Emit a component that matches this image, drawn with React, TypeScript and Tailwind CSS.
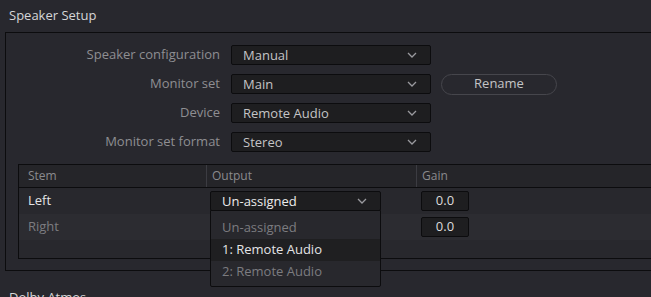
import React from 'react';

const Chevron: React.FC = () => (
  <svg width="10" height="6" viewBox="0 0 10 6" className="shrink-0">
    <path d="M1 1 L5 5 L9 1" fill="none" stroke="#9a9a9e" strokeWidth="1.3" />
  </svg>
);

const Select: React.FC<{ value: string; width: string; bright?: boolean }> = ({ value, width, bright }) => (
  <div
    className={`${width} h-[20px] flex items-center justify-between pl-[11px] pr-[13px] bg-[#1e1e20] border border-[#0c0c0e] rounded-[2px] text-[13px] ${
      bright ? 'text-[#ececec]' : 'text-[#c4c4c6]'
    }`}
  >
    <span className="leading-none">{value}</span>
    <Chevron />
  </div>
);

const GainBox: React.FC<{ value: string }> = ({ value }) => (
  <div className="w-[48px] h-[20px] flex items-center justify-center bg-[#1e1e20] border border-[#0c0c0e] rounded-[2px] text-[13px] text-[#dcdcdc]">
    {value}
  </div>
);

const fields = [
  { label: 'Speaker configuration', value: 'Manual' },
  { label: 'Monitor set', value: 'Main', rename: true },
  { label: 'Device', value: 'Remote Audio' },
  { label: 'Monitor set format', value: 'Stereo' },
];

export default function App() {
  return (
    <div
      className="w-[651px] h-[297px] overflow-hidden bg-[#28282e] text-[13px]"
      style={{ fontFamily: '"Open Sans", "Noto Sans", sans-serif' }}
    >
      <div className="h-[32px] pl-[9px] pt-[6px] text-[#d6d6d8] leading-[18px]">Speaker Setup</div>

      <div className="ml-[5px] h-[239px] border border-r-0 border-[#0c0c0e] pt-[12px]">
        <div className="flex flex-col gap-[9px]">
          {fields.map(f => (
            <div key={f.label} className="flex items-center h-[20px]">
              <div className="w-[214px] text-right text-[#8e8e92]">{f.label}</div>
              <div className="ml-[11px]">
                <Select value={f.value} width="w-[200px]" />
              </div>
              {f.rename && (
                <div className="ml-[10px] w-[116px] h-[21px] flex items-center justify-center rounded-full border border-[#46464c] text-[#c4c4c6]">
                  Rename
                </div>
              )}
            </div>
          ))}
        </div>

        <div className="ml-[12px] mt-[12px] h-[95px] border border-r-0 border-[#0c0c0e] bg-[#28282d]">
          <div className="flex h-[23px] border-b border-[#0c0c0e] bg-[#252529] text-[12px] text-[#8a8a8e]">
            <div className="w-[187px] pl-[9px] flex items-center">Stem</div>
            <div className="w-px bg-[#3c3c42] h-full" />
            <div className="w-[209px] pl-[5px] flex items-center">Output</div>
            <div className="w-px bg-[#3c3c42] h-full" />
            <div className="flex-1 pl-[5px] flex items-center">Gain</div>
          </div>

          <div className="flex h-[26px] items-center">
            <div className="w-[188px] pl-[9px] text-[#e4e4e6]">Left</div>
            <div className="w-[210px] pl-[3px] relative">
              <Select value="Un-assigned" width="w-[171px]" bright />
              <div className="absolute left-[3px] top-[19px] z-10 w-[171px] h-[77px] bg-[#28282d] border border-[#0c0c0e] rounded-b-[2px] pt-[6px]">
                <div className="h-[22px] pl-[11px] flex items-center text-[#7c7c80]">Un-assigned</div>
                <div className="h-[22px] pl-[11px] flex items-center bg-[#1f1f21] text-[#e4e4e6]">1: Remote Audio</div>
                <div className="h-[22px] pl-[11px] flex items-center text-[#7c7c80]">2: Remote Audio</div>
              </div>
            </div>
            <div className="pl-[4px]">
              <GainBox value="0.0" />
            </div>
          </div>

          <div className="flex h-[26px] items-center bg-[#2c2c31]">
            <div className="w-[188px] pl-[9px] text-[#7c7c80]">Right</div>
            <div className="w-[210px]" />
            <div className="pl-[4px]">
              <GainBox value="0.0" />
            </div>
          </div>
        </div>
      </div>

      <div className="pl-[9px] mt-[17px] text-[#d6d6d8] leading-[18px]">Dolby Atmos</div>
    </div>
  );
}
